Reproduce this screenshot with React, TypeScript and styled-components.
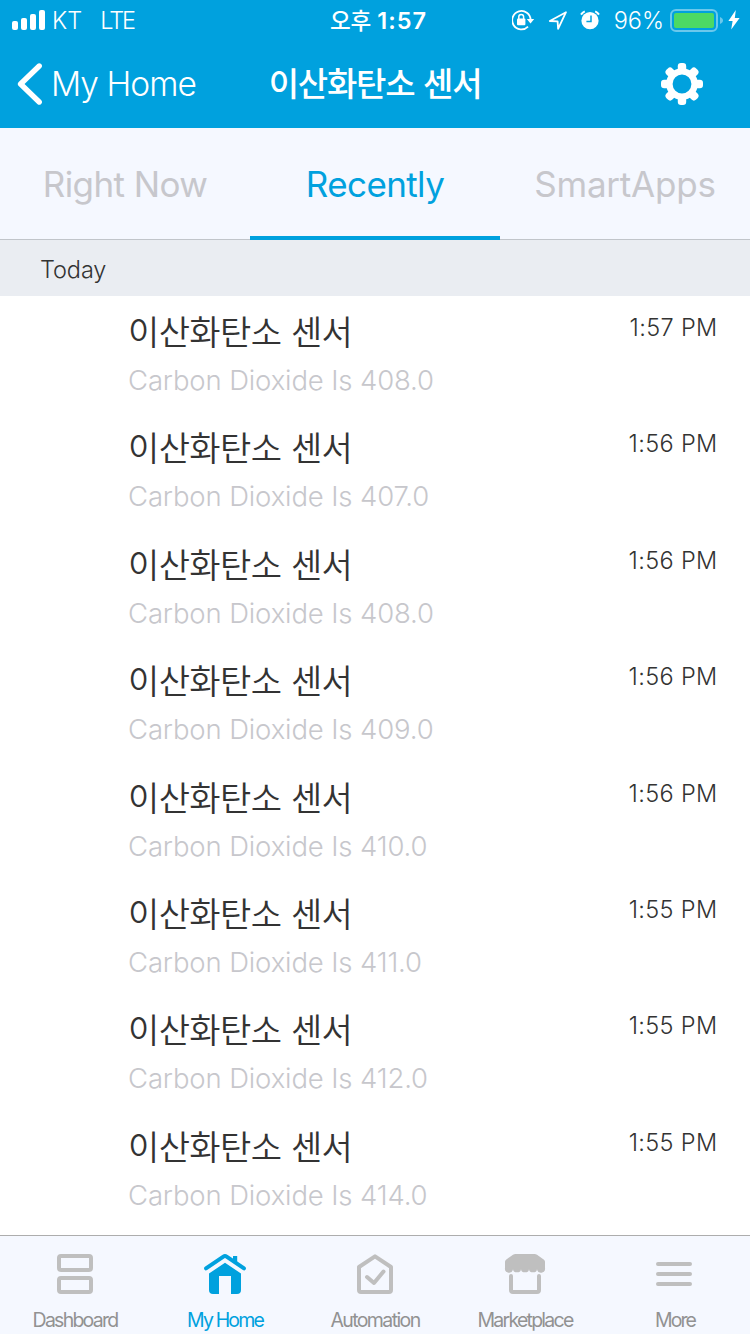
import React from "react";
import styled, { createGlobalStyle } from "styled-components";

const BLUE = "#00a1de";
const PANEL = "#f5f8ff";
const ICON = "#bfbfbf";

const GlobalStyle = createGlobalStyle`
  *, *::before, *::after { box-sizing: border-box; }
  html, body { margin: 0; padding: 0; background: #fff; }
  body {
    font-family: Inter, "Noto Sans CJK KR", sans-serif;
    color: #333;
    -webkit-font-smoothing: antialiased;
  }
  svg { display: block; flex: none; }
`;

const Screen = styled.div`
  width: 750px;
  height: 1334px;
  display: flex;
  flex-direction: column;
  overflow: hidden;
  background: #fff;
`;

const Header = styled.header`
  flex: none;
  height: 128px;
  background: ${BLUE};
  color: #fff;
`;

const StatusBar = styled.div`
  height: 40px;
  display: grid;
  grid-template-columns: 1fr auto 1fr;
  align-items: center;
  padding: 0 10px 0 12px;
`;

const StatusGroup = styled.div<{ $end?: boolean }>`
  display: flex;
  align-items: center;
  height: 40px;
  justify-content: ${(p) => (p.$end ? "flex-end" : "flex-start")};
`;

const StatusText = styled.span<{ $left?: number; $spacing?: number }>`
  font-size: 23.5px;
  font-weight: 350;
  line-height: 30px;
  white-space: nowrap;
  padding-top: 1px;
  margin-left: ${(p) => p.$left ?? 0}px;
  letter-spacing: ${(p) => p.$spacing ?? 0}px;
`;

const Clock = styled.div`
  display: flex;
  gap: 6px;
  padding: 1px 0 0 5px;
  font-size: 23.5px;
  line-height: 30px;
  font-weight: 600;
  letter-spacing: 1px;
`;

const Meridiem = styled.span`
  font-size: 22.5px;
  font-weight: 500;
  letter-spacing: 0;
`;

const NavBar = styled.div`
  height: 88px;
  display: grid;
  grid-template-columns: 250px 1fr 250px;
  align-items: center;
`;

const BackButton = styled.button`
  display: flex;
  align-items: center;
  gap: 8px;
  height: 88px;
  padding: 0 0 0 17px;
  border: 0;
  background: none;
  color: inherit;
  font: 350 33.5px/44px Inter, sans-serif;
  letter-spacing: -0.95px;
  white-space: nowrap;
`;

const Title = styled.h1`
  margin: 0;
  font-size: 33px;
  font-weight: 500;
  line-height: 44px;
  letter-spacing: -1.2px;
  word-spacing: 1px;
  text-align: center;
  white-space: nowrap;
`;

const SettingsButton = styled.button`
  justify-self: end;
  margin-right: 46px;
  padding: 0;
  border: 0;
  background: none;
  color: inherit;
`;

const Tabs = styled.nav`
  flex: none;
  display: grid;
  grid-template-columns: repeat(3, 1fr);
  height: 112px;
  background: ${PANEL};
`;

const Tab = styled.button<{ $active?: boolean; $spacing: number }>`
  border: 0;
  border-bottom: ${(p) => (p.$active ? `4px solid ${BLUE}` : "1px solid #c1c5ca")};
  background: none;
  padding: ${(p) => (p.$active ? 3 : 0)}px 0 0;
  font: 400 35px/46px Inter, sans-serif;
  letter-spacing: ${(p) => p.$spacing}px;
  color: ${(p) => (p.$active ? BLUE : "#c7c7cc")};
  white-space: nowrap;
`;

const SectionHeader = styled.h2`
  flex: none;
  margin: 0;
  height: 56px;
  padding: 4px 0 0 40px;
  background: #eaedf2;
  font-size: 23.5px;
  font-weight: 300;
  line-height: 52px;
  letter-spacing: -0.1px;
`;

const EventList = styled.ul`
  flex: 1;
  min-height: 0;
  margin: 0;
  padding: 0;
  list-style: none;
  overflow: hidden;
`;

const EventRow = styled.li`
  display: flex;
  justify-content: space-between;
  height: 116.4px;
  padding: 12px 32.5px 0 128px;
`;

const EventName = styled.div`
  font-family: "Noto Sans CJK KR", sans-serif;
  font-size: 34px;
  font-weight: 350;
  line-height: 46px;
  letter-spacing: -0.6px;
  word-spacing: 2.5px;
  white-space: nowrap;
`;

const EventDetail = styled.div`
  margin-top: 2px;
  font-size: 27.5px;
  font-weight: 300;
  line-height: 48px;
  letter-spacing: -0.13px;
  color: #c7c7cc;
  white-space: nowrap;
`;

const EventTime = styled.time`
  font-size: 23.5px;
  font-weight: 300;
  line-height: 39px;
  letter-spacing: 0.35px;
  white-space: nowrap;
`;

const TabBar = styled.nav`
  flex: none;
  display: grid;
  grid-template-columns: repeat(5, 1fr);
  height: 99px;
  border-top: 1px solid #adadad;
  background: ${PANEL};
`;

const TabItem = styled.a<{ $active?: boolean; $spacing: number }>`
  display: flex;
  flex-direction: column;
  align-items: center;
  padding-top: 16px;
  gap: 10px;
  color: ${(p) => (p.$active ? BLUE : "#929292")};
  font-size: 19.5px;
  line-height: 28px;
  letter-spacing: ${(p) => p.$spacing}px;
  white-space: nowrap;
`;

const SignalIcon = () => (
  <svg width="33" height="20" viewBox="0 0 33 20" fill="currentColor">
    <rect x="0" y="11" width="6" height="9" rx="2" />
    <rect x="9" y="8" width="6" height="12" rx="2" />
    <rect x="18" y="4" width="6" height="16" rx="2" />
    <rect x="27" y="0" width="6" height="20" rx="2" />
  </svg>
);

const RotationLockIcon = () => (
  <svg width="23" height="22" viewBox="1 0 23 22" fill="none" stroke="currentColor">
    <path d="M17 17.600A9.200 9.200 0 1 1 19.600 11" strokeWidth="1.8" />
    <path d="M15.8 10h7.4l-3.7 4.4z" fill="currentColor" stroke="none" />
    <rect x="6" y="9.6" width="8.4" height="6.6" rx="1" fill="currentColor" stroke="none" />
    <path d="M7.8 10V7.8a2.4 2.4 0 0 1 4.8 0V10" strokeWidth="1.5" />
  </svg>
);

const LocationIcon = () => (
  <svg width="20" height="20" viewBox="0 0 20 20" fill="none" stroke="currentColor" strokeWidth="1.8" strokeLinejoin="round">
    <path d="M18 2.200 1.800 11l7.800.400.500 7.400z" />
  </svg>
);

const AlarmIcon = () => (
  <svg width="20" height="20" viewBox="0 0 20 20" fill="none">
    <circle cx="10" cy="10.7" r="8.6" fill="currentColor" />
    <path d="M1 4.6A9 9 0 0 1 4.8 1.4M19 4.6A9 9 0 0 0 15.2 1.4" stroke="currentColor" strokeWidth="2" />
    <path d="M11 5.4v6H6.4" stroke={BLUE} strokeWidth="1.5" />
  </svg>
);

const BatteryIcon = () => (
  <svg width="54" height="24" viewBox="0 -1 54 24">
    <rect x="1" y="1" width="46" height="21" rx="5" fill="none" stroke="#fff" strokeOpacity=".42" strokeWidth="2" />
    <rect x="4" y="4" width="40" height="15" rx="2" fill="#4cd964" />
    <path d="M50 8c4 1.600 4 5.400 0 7z" fill="#fff" fillOpacity=".42" />
  </svg>
);

const BoltIcon = () => (
  <svg width="12" height="20" viewBox="0 0 12 20" fill="currentColor">
    <path d="M7.800 0 .4 11h4.200L3.200 19.500 11.600 8H6.800z" />
  </svg>
);

const BackIcon = () => (
  <svg width="26" height="44" viewBox="0 0 26 44" fill="none" stroke="currentColor" strokeWidth="5.400" strokeLinecap="round" strokeLinejoin="round">
    <path d="M22.200 4 3.600 22l18.600 18" />
  </svg>
);

const GearIcon = () => (
  <svg width="44" height="44" viewBox="-22 -22 44 44">
    <circle r="12.600" fill="none" stroke="currentColor" strokeWidth="6.400" />
    {[0, 45, 90, 135, 180, 225, 270, 315].map((angle) => (
      <rect key={angle} x="-4.200" y="-21" width="8.400" height="9" rx="3.200" fill="currentColor" transform={`rotate(${angle})`} />
    ))}
  </svg>
);

const DashboardIcon = () => (
  <svg width="44" height="44" viewBox="0 0 44 44" fill="none" stroke={ICON} strokeWidth="4">
    <rect x="6" y="4" width="32" height="14" rx="2" />
    <rect x="6" y="26" width="32" height="14" rx="2" />
  </svg>
);

const HomeIcon = () => (
  <svg width="44" height="44" viewBox="0 0 44 44" fill={BLUE}>
    <path d="M3 16.400 20.400 4.600q1.600-1.100 3.200 0L41 16.400" fill="none" stroke={BLUE} strokeWidth="4" strokeLinecap="round" />
    <path d="M30 4h4.200v7L30 8z" />
    <path d="M22 10.800 38 21.500V38a4 4 0 0 1-4 4h-6V24H16v18h-6a4 4 0 0 1-4-4V21.500z" />
  </svg>
);

const AutomationIcon = () => (
  <svg width="44" height="44" viewBox="0 0 44 44" fill="none" stroke={ICON} strokeWidth="4" strokeLinejoin="round" strokeLinecap="round">
    <path d="M22 4.300 38 15v23q0 2-2 2H8q-2 0-2-2V15z" />
    <path d="m14 25 7 6 9.500-11.500" />
  </svg>
);

const MarketIcon = () => (
  <svg width="44" height="44" viewBox="0 0 44 44" fill={ICON}>
    <path d="M10 2.700Q11 2 12.500 2h19q1.500 0 2.500.7l7 5q1 .8 1 2V16a4 4 0 0 1-8 1.300 4 3 0 0 1-8 0 4 3 0 0 1-8 0 4 3 0 0 1-8 0A4 4 0 0 1 2 16V9.700q0-1.200 1-2z" />
    <path d="M8 24v14q0 2 2 2h24q2 0 2-2V24" fill="none" stroke={ICON} strokeWidth="4" strokeLinecap="round" />
  </svg>
);

const MoreIcon = () => (
  <svg width="44" height="44" viewBox="0 0 44 44" fill="none" stroke={ICON} strokeWidth="4" strokeLinecap="round">
    <path d="M5 12h32M5 22h32M5 32h32" />
  </svg>
);

const events = [
  { time: "1:57 PM", level: "408.0" },
  { time: "1:56 PM", level: "407.0" },
  { time: "1:56 PM", level: "408.0" },
  { time: "1:56 PM", level: "409.0" },
  { time: "1:56 PM", level: "410.0" },
  { time: "1:55 PM", level: "411.0" },
  { time: "1:55 PM", level: "412.0" },
  { time: "1:55 PM", level: "414.0" },
];

const tabItems = [
  { label: "Dashboard", icon: <DashboardIcon />, spacing: -1.75 },
  { label: "My Home", icon: <HomeIcon />, spacing: -1.85, active: true },
  { label: "Automation", icon: <AutomationIcon />, spacing: -1.6 },
  { label: "Marketplace", icon: <MarketIcon />, spacing: -1.75 },
  { label: "More", icon: <MoreIcon />, spacing: -1.9 },
];

const StatusIcons = styled.div`
  display: flex;
  align-items: center;
  gap: 12.5px;
  margin-right: 13.5px;
`;

const Power = styled.div`
  display: flex;
  align-items: center;
  gap: 4px;
  margin-left: 6px;
`;

export default function App() {
  return (
    <>
      <GlobalStyle />
      <Screen>
        <Header>
          <StatusBar>
            <StatusGroup>
              <SignalIcon />
              <StatusText $left={7}>KT</StatusText>
              <StatusText $left={18} $spacing={-2}>LTE</StatusText>
            </StatusGroup>
            <Clock>
              <Meridiem>오후</Meridiem>
              <span>1:57</span>
            </Clock>
            <StatusGroup $end>
              <StatusIcons>
                <RotationLockIcon />
                <LocationIcon />
                <AlarmIcon />
              </StatusIcons>
              <StatusText>96%</StatusText>
              <Power>
                <BatteryIcon />
                <BoltIcon />
              </Power>
            </StatusGroup>
          </StatusBar>
          <NavBar>
            <BackButton>
              <BackIcon />
              My Home
            </BackButton>
            <Title>이산화탄소 센서</Title>
            <SettingsButton aria-label="Settings">
              <GearIcon />
            </SettingsButton>
          </NavBar>
        </Header>
        <Tabs>
          <Tab $spacing={-0.6}>Right Now</Tab>
          <Tab $active $spacing={-0.6}>Recently</Tab>
          <Tab $spacing={-0.2}>SmartApps</Tab>
        </Tabs>
        <SectionHeader>Today</SectionHeader>
        <EventList>
          {events.map((event, index) => (
            <EventRow key={index}>
              <div>
                <EventName>이산화탄소 센서</EventName>
                <EventDetail>Carbon Dioxide Is {event.level}</EventDetail>
              </div>
              <EventTime>{event.time}</EventTime>
            </EventRow>
          ))}
        </EventList>
        <TabBar>
          {tabItems.map((item) => (
            <TabItem key={item.label} $active={item.active} $spacing={item.spacing}>
              {item.icon}
              {item.label}
            </TabItem>
          ))}
        </TabBar>
      </Screen>
    </>
  );
}
